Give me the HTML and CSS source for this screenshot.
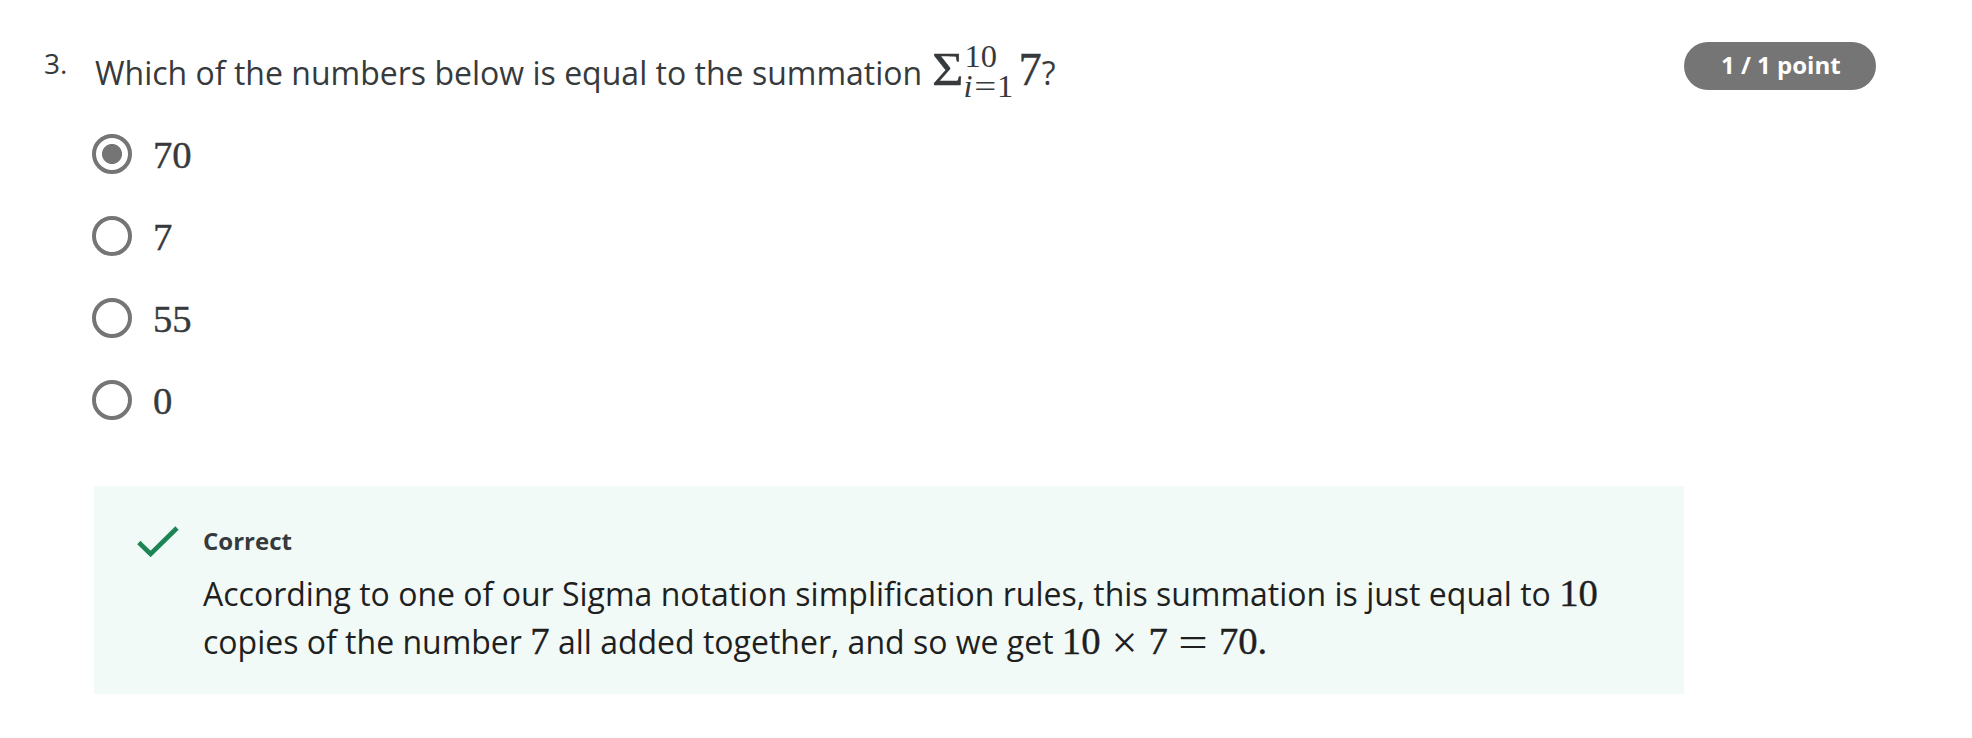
FILE: index.html
```html
<!DOCTYPE html>
<html lang="en">
<head>
<meta charset="utf-8">
<title>Question 3</title>
<link rel="stylesheet" href="styles.css">
</head>
<body>
<main class="question">
  <header class="prompt">
    <span class="number">3.</span>
    <h1 class="text">Which of the numbers below is equal to the summation <span class="sum"><span class="sigma">Σ</span><span class="limits"><span class="upper">10</span><span class="lower"><i>i</i><span class="eq">=</span>1</span></span><span class="term">7</span></span>?</h1>
    <span class="points">1 / 1 point</span>
  </header>
  <div class="options">
    <label class="option"><span class="radio selected"></span><span class="math">70</span></label>
    <label class="option"><span class="radio"></span><span class="math">7</span></label>
    <label class="option"><span class="radio"></span><span class="math">55</span></label>
    <label class="option"><span class="radio"></span><span class="math">0</span></label>
  </div>
  <section class="feedback">
    <svg class="check" viewBox="0 0 42 32" width="42" height="32"><path d="M1.8 17.5 13.6 29 40 3" fill="none" stroke="#1d8455" stroke-width="4.6"/></svg>
    <div class="explain">
      <h2 class="verdict">Correct</h2>
      <p class="reason">According to one of our Sigma notation simplification rules, this summation is just equal to <span class="math">10</span><br>copies of the number <span class="math">7</span> all added together, and so we get <span class="math">10<span class="op times">×</span>7<span class="op equals">=</span>70.</span></p>
    </div>
  </section>
</main>
</body>
</html>
```
FILE: styles.css
```css
body {
  margin: 0;
  background: #fff;
  color: #373a3c;
  font-family: "Open Sans", "Noto Sans", sans-serif;
}
.question {
  padding: 42px 96px 0 44px;
}
.prompt {
  display: flex;
  align-items: flex-start;
  height: 92px;
}
.number {
  width: 51px;
  font-size: 28px;
  line-height: 42px;
}
.text {
  flex: 1;
  margin: 7px 0 0;
  font-size: 32px;
  font-weight: 400;
  line-height: 48px;
  height: 48px;
  letter-spacing: 0.01px;
  white-space: nowrap;
}
.points {
  box-sizing: border-box;
  width: 192px;
  height: 48px;
  padding-left: 37px;
  border-radius: 24px;
  background: #757575;
  color: #fff;
  font-size: 24px;
  font-weight: 700;
  line-height: 46px;
  white-space: nowrap;
}
.math, .sum {
  font-family: "Liberation Serif", serif;
  font-size: 38.7px;
  line-height: 0;
  -webkit-text-stroke: 0.4px currentColor;
}
.sum {
  display: inline-flex;
  align-items: baseline;
  margin-left: 1px;
  font-size: 46.5px;
}
.sigma {
  width: 32px;
  transform: scaleX(1.17);
  transform-origin: left;
}
.limits {
  display: grid;
  width: 55px;
  height: 60px;
  grid-template-rows: 0 30px;
  font-size: 32.5px;
  margin-bottom: -60px;
  transform: translateY(-18px);
  -webkit-text-stroke: 0;
}
.upper {
  padding-left: 1px;
}
.lower {
  display: flex;
  align-items: baseline;
  margin-top: 30px;
}
.eq {
  margin: 0 3px;
  transform: scaleX(1.2);
}
.options {
  display: flex;
  flex-direction: column;
  gap: 42px;
  padding-left: 48px;
}
.option {
  display: flex;
  gap: 21px;
  height: 40px;
}
.option .math {
  line-height: 43px;
}
.radio {
  box-sizing: border-box;
  width: 40px;
  height: 40px;
  border: 4px solid #757575;
  border-radius: 50%;
}
.selected {
  background: radial-gradient(circle, #757575 9.6px, #fff 10.4px);
}
.feedback {
  display: flex;
  box-sizing: border-box;
  gap: 24px;
  width: 1590px;
  height: 208px;
  margin: 66px 0 0 50px;
  padding: 39px 0 0 43px;
  background: #f1faf7;
}
.verdict {
  margin: 0;
  font-size: 24px;
  font-weight: 700;
  line-height: 32px;
}
.reason {
  margin: 13px 0 0;
  color: #1f1f1f;
  font-size: 32px;
  line-height: 48px;
  white-space: nowrap;
}
.op {
  display: inline-block;
  -webkit-text-stroke: 0;
}
.times {
  width: 28px;
  margin: 0 10px;
  font-size: 46px;
  text-align: center;
  transform: translateY(4px);
}
.equals {
  width: 22px;
  margin: 0 14.5px;
  transform: translateY(1px) scale(1.35, 1.1);
}
```
